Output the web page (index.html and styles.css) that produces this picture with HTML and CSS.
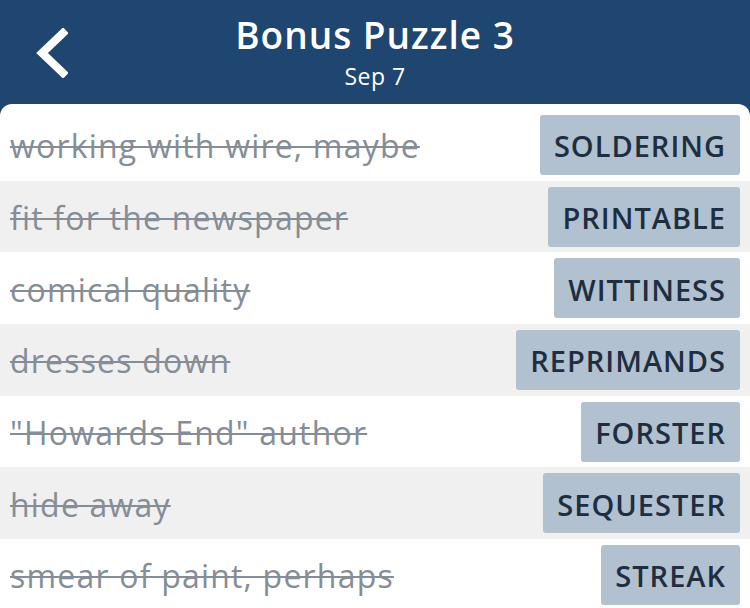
FILE: index.html
```html
<!DOCTYPE html>
<html lang="en">
<head>
  <meta charset="UTF-8">
  <meta name="viewport" content="width=device-width, initial-scale=1.0">
  <title>Bonus Puzzle 3</title>
  <link rel="stylesheet" href="styles.css">
</head>
<body>

  <div class="screen">
    <header class="topbar">
      <button class="back" aria-label="Back">
        <svg width="34" height="50" viewBox="0 0 34 50">
          <path d="M29 5 L8 25 L29 45" fill="none" stroke="#fff" stroke-width="8" stroke-linecap="square"/>
        </svg>
      </button>
      <div class="title-block">
        <h1>Bonus Puzzle 3</h1>
        <div class="date">Sep 7</div>
      </div>
      <div></div>
    </header>

    <div class="card">
      <div class="row">
        <span class="clue">working with wire, maybe</span>
        <span class="answer">SOLDERING</span>
      </div>
      <div class="row">
        <span class="clue">fit for the newspaper</span>
        <span class="answer">PRINTABLE</span>
      </div>
      <div class="row">
        <span class="clue">comical quality</span>
        <span class="answer">WITTINESS</span>
      </div>
      <div class="row">
        <span class="clue">dresses down</span>
        <span class="answer">REPRIMANDS</span>
      </div>
      <div class="row">
        <span class="clue">"Howards End" author</span>
        <span class="answer">FORSTER</span>
      </div>
      <div class="row">
        <span class="clue">hide away</span>
        <span class="answer">SEQUESTER</span>
      </div>
      <div class="row">
        <span class="clue">smear of paint, perhaps</span>
        <span class="answer">STREAK</span>
      </div>
    </div>
  </div>

</body>
</html>
```

FILE: styles.css
```css
* {
  margin: 0;
  padding: 0;
  box-sizing: border-box;
  font-family: "Open Sans", sans-serif;
}

body {
  background-color: #fff;
  height: 608px;
  overflow: hidden;
}

.screen {
  background-color: #1f4571; /* blue behind the card corners */
}

.topbar {
  display: grid;
  grid-template-columns: 1fr auto 1fr;
  align-items: center;
  height: 104px;
  color: #fff;
}

.back {
  justify-self: start;
  margin-left: 34px;
  margin-top: 2px;
  background: none;
  border: none;
  display: flex;
}

.title-block {
  text-align: center;
  margin-top: -2px;
}

h1 {
  font-size: 37px;
  font-weight: 600;
  letter-spacing: 1px;
  line-height: 44px;
}

.date {
  font-size: 23px;
  letter-spacing: 0.5px;
  line-height: 28px;
  margin-top: 5px;
}

.card {
  background-color: #fff;
  border-radius: 12px 12px 0 0;
  padding-top: 5px;
  overflow: hidden;
}

.row {
  display: flex;
  justify-content: space-between;
  align-items: center;
  height: 71.7px;
  padding: 0 10px;
}

.row:nth-child(even) {
  background-color: #f0f0f0;
}

.clue {
  font-size: 32px;
  letter-spacing: 1.2px;
  color: #858d96;
  text-decoration: line-through;
  text-decoration-thickness: 2px;
  white-space: nowrap;
  padding-top: 2px;
}

.answer {
  display: flex;
  align-items: center;
  height: 60px;
  padding: 2px 14px 0;
  background-color: #b1c1d0;
  border-radius: 3px;
  color: #1e2e40;
  font-size: 29px;
  font-weight: 600;
  letter-spacing: 1px;
}
```
